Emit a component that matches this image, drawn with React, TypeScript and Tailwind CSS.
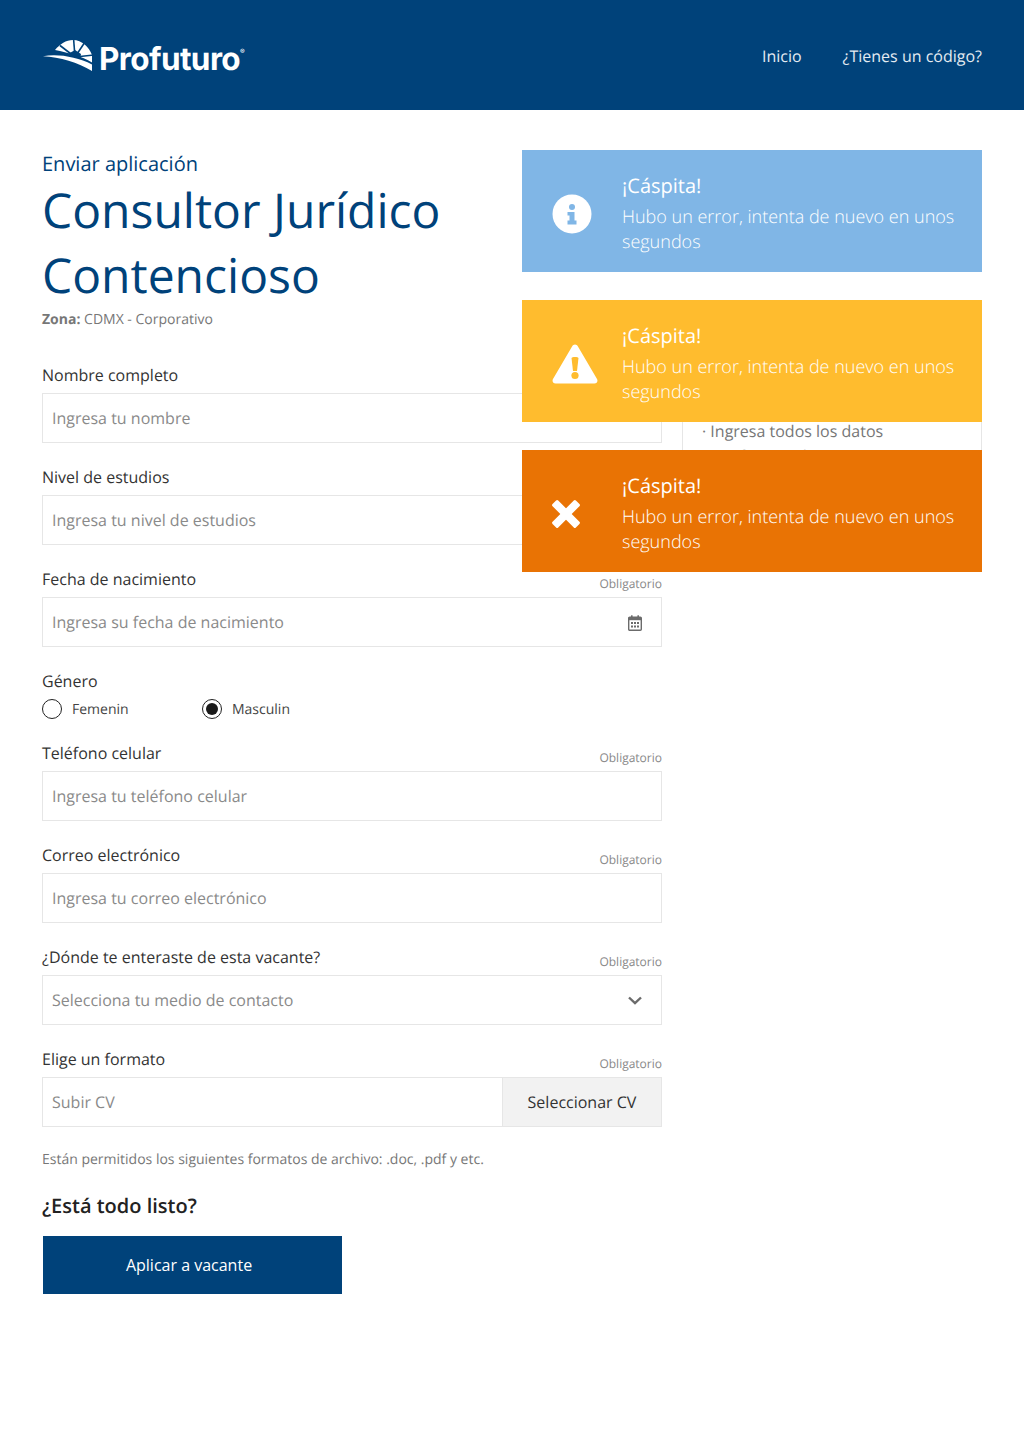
const FONT = { fontFamily: '"Open Sans", sans-serif' };

function Logo() {
  return (
    <div className="flex items-center">
      <svg width="52" height="38" viewBox="0 0 52 38" className="mr-[5px]">
        <path d="M13 14 C18 8 24 4 31 4 C40 4 47 11 50 19 L50 26.5 C40 20.5 26 16.5 13 14 Z" fill="#fff" />
        <g stroke="#00427a" strokeWidth="1.6" fill="none">
          <path d="M33 21 L18 9.5" />
          <path d="M33 21 L31.5 2" />
          <path d="M33 21 L43 6" />
          <path d="M33 21 L52 19" />
        </g>
        <path d="M26 18 L33 14 L39 18 L38 23 Z" fill="#00427a" />
        <path d="M1 20.3 C16 17.5 35 21 50 28.5 L50 35 C36 26.5 18 21 1 20.3 Z" fill="#fff" />
      </svg>
      <span className="text-[31.5px] font-bold text-white leading-none tracking-[-0.6px] translate-y-[4px]" style={{ fontFamily: 'Inter, sans-serif' }}>Profuturo</span>
      <span className="text-[7px] text-white self-start mt-[11px]" style={{ fontFamily: 'Inter, sans-serif' }}>®</span>
    </div>
  );
}

function Label({ text, required = true }: { text: string; required?: boolean }) {
  return (
    <div className="flex justify-between items-end h-[22px] mb-[7px] w-[620px]">
      <span className="text-[16px] leading-[22px] text-[#333333]">{text}</span>
      {required && <span className="text-[12px] leading-[16px] text-[#888888] translate-y-[2px]">Obligatorio</span>}
    </div>
  );
}

function Input({ placeholder, children }: { placeholder: string; children?: React.ReactNode }) {
  return (
    <div className="w-[620px] h-[50px] border border-[#e6e6e6] flex items-center justify-between pl-[9px] pr-[19px] bg-white">
      <span className="text-[16px] text-[#8a8a8a]">{placeholder}</span>
      {children}
    </div>
  );
}

function Field({ label, placeholder, required = true, children }: { label: string; placeholder: string; required?: boolean; children?: React.ReactNode }) {
  return (
    <div className="mt-[23px]">
      <Label text={label} required={required} />
      <Input placeholder={placeholder}>{children}</Input>
    </div>
  );
}

function CalendarIcon() {
  return (
    <svg width="14" height="16" viewBox="0 0 14 16" className="mt-[1px]">
      <rect x="0.7" y="2.2" width="12.6" height="13" rx="1" fill="none" stroke="#6b6b6b" strokeWidth="1.4" />
      <rect x="0.7" y="2.2" width="12.6" height="3" fill="#6b6b6b" />
      <rect x="3" y="0.3" width="1.6" height="3" fill="#6b6b6b" />
      <rect x="9.4" y="0.3" width="1.6" height="3" fill="#6b6b6b" />
      <g fill="#6b6b6b">
        <rect x="3" y="7" width="2" height="2" /><rect x="6" y="7" width="2" height="2" /><rect x="9" y="7" width="2" height="2" />
        <rect x="3" y="10.5" width="2" height="2" /><rect x="6" y="10.5" width="2" height="2" /><rect x="9" y="10.5" width="2" height="2" />
      </g>
    </svg>
  );
}

function Toast({ color, icon }: { color: string; icon: React.ReactNode }) {
  return (
    <div className={`w-[460px] h-[122px] flex text-white ${color}`}>
      <div className="w-[100px] shrink-0 flex items-center pl-[30px] pt-[5px]">{icon}</div>
      <div className="pt-[22px] pr-[20px]">
        <div className="text-[20px] leading-[28px]">¡Cáspita!</div>
        <div className="text-[18px] leading-[25px] font-light mt-[5px]">Hubo un error, intenta de nuevo en unos segundos</div>
      </div>
    </div>
  );
}

export default function App() {
  return (
    <div className="relative w-[1024px] h-[1454px] bg-white overflow-hidden [text-rendering:geometricPrecision]" style={FONT}>
      <header className="h-[110px] bg-[#00427a] flex items-center justify-between pl-[42px] pr-[42px]">
        <Logo />
        <nav className="flex gap-[41px] text-[16px] text-[#e4ebf2] font-normal pt-[2px]">
          <span>Inicio</span>
          <span>¿Tienes un código?</span>
        </nav>
      </header>

      <main className="flex pl-[42px] pr-[42px] gap-[20px]">
        <section className="w-[620px] pt-[40px]">
          <div className="text-[20px] leading-[28px] text-[#00427a]">Enviar aplicación</div>
          <h1 className="text-[48px] leading-[65px] text-[#00427a]">Consultor Jurídico Contencioso</h1>
          <div className="text-[14px] leading-[19px] text-[#777777] mt-[2px]"><b className="font-bold">Zona:</b> CDMX - Corporativo</div>

          <div className="pt-[12px]">
            <Field label="Nombre completo" placeholder="Ingresa tu nombre" required={false} />
            <Field label="Nivel de estudios" placeholder="Ingresa tu nivel de estudios" required={false} />
            <Field label="Fecha de nacimiento" placeholder="Ingresa su fecha de nacimiento"><CalendarIcon /></Field>

            <div className="mt-[23px]">
              <div className="text-[16px] leading-[22px] text-[#333333]">Género</div>
              <div className="flex mt-[5px] h-[22px] pt-[2px] items-center text-[14px] text-[#444444]">
                <span className="w-[160px] flex items-center gap-[10px]">
                  <span className="w-[20px] h-[20px] rounded-full border border-[#222222]" />Femenin
                </span>
                <span className="flex items-center gap-[10px]">
                  <span className="w-[20px] h-[20px] rounded-full border border-[#222222] flex items-center justify-center">
                    <span className="w-[12px] h-[12px] rounded-full bg-[#1a1a1a]" />
                  </span>Masculin
                </span>
              </div>
            </div>

            <Field label="Teléfono celular" placeholder="Ingresa tu teléfono celular" />
            <Field label="Correo electrónico" placeholder="Ingresa tu correo electrónico" />
            <Field label="¿Dónde te enteraste de esta vacante?" placeholder="Selecciona tu medio de contacto">
              <svg width="14" height="9" viewBox="0 0 14 9" className="mt-[1px]">
                <path d="M1 1.5 L7 7.2 L13 1.5" fill="none" stroke="#6b6b6b" strokeWidth="2.4" />
              </svg>
            </Field>

            <div className="mt-[23px]">
              <Label text="Elige un formato" />
              <div className="w-[620px] h-[50px] border border-[#e6e6e6] flex items-center">
                <span className="flex-1 pl-[9px] text-[16px] text-[#8a8a8a]">Subir CV</span>
                <span className="w-[159px] h-full flex items-center justify-center bg-[#f2f2f2] border-l border-[#e6e6e6] text-[16px] text-[#333333]">Seleccionar CV</span>
              </div>
            </div>

            <p className="text-[14px] leading-[19px] text-[#777777] mt-[23px]">Están permitidos los siguientes formatos de archivo: .doc, .pdf y etc.</p>
            <h2 className="text-[20px] leading-[28px] font-semibold text-[#222222] mt-[23px]">¿Está todo listo?</h2>
            <button className="ml-[1px] mt-[16px] w-[299px] h-[58px] pr-[7px] bg-[#00427a] text-white text-[16px]">Aplicar a vacante</button>
          </div>
        </section>

        <aside className="w-[300px] mt-[240px] h-[200px] border-x border-[#e6e6e6] pl-[19px] pt-[69px] text-[16px] leading-[25px] text-[#777777]">
          <div>· Ingresa todos los datos</div>
          <div>· Verifica tus datos</div>
        </aside>
      </main>

      <div className="absolute left-[522px] top-[150px] flex flex-col gap-[28px]">
        <Toast color="bg-[#80b6e6]" icon={
          <svg width="40" height="40" viewBox="0 0 40 40">
            <circle cx="20" cy="20" r="19.5" fill="#fff" />
            <circle cx="20" cy="13" r="3" fill="#80b6e6" />
            <path d="M15.5 18 H22.5 V26.5 H24.5 V30.5 H15.5 V26.5 H17.5 V21.5 H15.5 Z" fill="#80b6e6" />
          </svg>
        } />
        <Toast color="bg-[#ffbc2e]" icon={
          <svg width="46" height="42" viewBox="0 0 46 42">
            <path d="M23 1.5 C24.3 1.5 25.2 2.2 25.8 3.3 L45 36 C46.2 38.2 44.9 40.5 42.4 40.5 H3.6 C1.1 40.5 -.2 38.2 1 36 L20.2 3.3 C20.8 2.2 21.7 1.5 23 1.5 Z" fill="#fff" />
            <path d="M19.5 15 C19.5 13.5 26.5 13.5 26.5 15 L25 28 H21 Z" fill="#ffbc2e" />
            <circle cx="23" cy="32.5" r="3.6" fill="#ffbc2e" />
          </svg>
        } />
        <Toast color="bg-[#e97304]" icon={
          <svg width="28" height="28" viewBox="0 0 28 28">
            <g fill="#fff" transform="rotate(45 14 14)">
              <rect x="-2.5" y="10" width="33" height="8" rx="1.5" />
              <rect x="10" y="-2.5" width="8" height="33" rx="1.5" />
            </g>
          </svg>
        } />
      </div>
    </div>
  );
}
